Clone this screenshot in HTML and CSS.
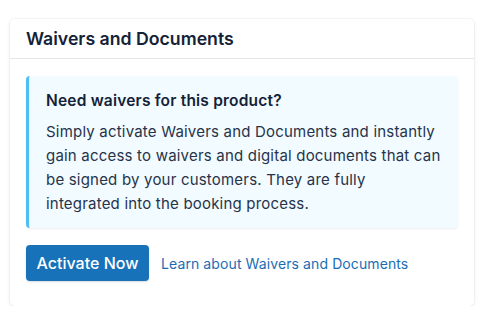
FILE: index.html
```html
<!DOCTYPE html>
<html lang="en">
<head>
<meta charset="utf-8">
<link rel="stylesheet" href="styles.css">
</head>
<body>
<div class="card">
  <div class="card-header">
    <h2 class="card-title">Waivers and Documents</h2>
  </div>
  <div class="card-body">
    <div class="callout">
      <div class="callout-title">Need waivers for this product?</div>
      <p class="callout-text">Simply activate Waivers and Documents and instantly gain access to waivers and digital documents that can be signed by your customers. They are fully integrated into the booking process.</p>
    </div>
    <div class="actions">
      <button class="btn-primary">Activate Now</button>
      <a class="link" href="#">Learn about Waivers and Documents</a>
    </div>
  </div>
</div>
</body>
</html>
```

FILE: styles.css
```css
* { box-sizing: border-box; }
html, body { margin: 0; padding: 0; background: #ffffff; }
body {
  font-family: Inter, "Noto Sans", sans-serif;
  color: #1b2738;
  padding: 19px 13px 0 10px;
}
.card {
  width: 464px;
  height: 287px;
  background: #fff;
  border-radius: 5px;
  box-shadow: 0 0 0 1px rgba(0,0,0,0.025), 0 1px 4px rgba(0,0,0,0.09);
}
.card-header {
  height: 40px;
  padding: 0 16px;
  display: flex;
  align-items: center;
  border-bottom: 1px solid #e3e5e8;
}
.card-title {
  margin: 0;
  font-size: 17.7px;
  font-weight: 600;
  color: #142238;
}
.card-body {
  padding: 17px 16px 0 16px;
}
.callout {
  height: 152px;
  background: #f2fbff;
  border-left: 3px solid #4cc0f4;
  border-radius: 4px;
  box-shadow: 0 1px 2px rgba(0,0,0,0.08);
  padding: 13px 14px 12px 17px;
}
.callout-title {
  font-size: 15.5px;
  font-weight: 600;
  line-height: 24px;
  letter-spacing: 0.2px;
  color: #142238;
  margin-bottom: 7px;
}
.callout-text {
  margin: 0;
  font-size: 15px;
  line-height: 24px;
  letter-spacing: 0.2px;
  color: #26334a;
}
.actions {
  margin-top: 17px;
  display: flex;
  align-items: center;
  gap: 12px;
}
.btn-primary {
  width: 123px;
  height: 36px;
  border: none;
  border-radius: 4px;
  background: #1772b9;
  color: #fff;
  font-family: Inter, "Noto Sans", sans-serif;
  font-size: 16px;
  font-weight: 500;
  padding: 0;
  box-shadow: 0 1px 2px rgba(0,0,0,0.15);
}
.link {
  font-size: 14px;
  letter-spacing: 0.1px;
  color: #1a6db5;
  text-decoration: none;
}
```
